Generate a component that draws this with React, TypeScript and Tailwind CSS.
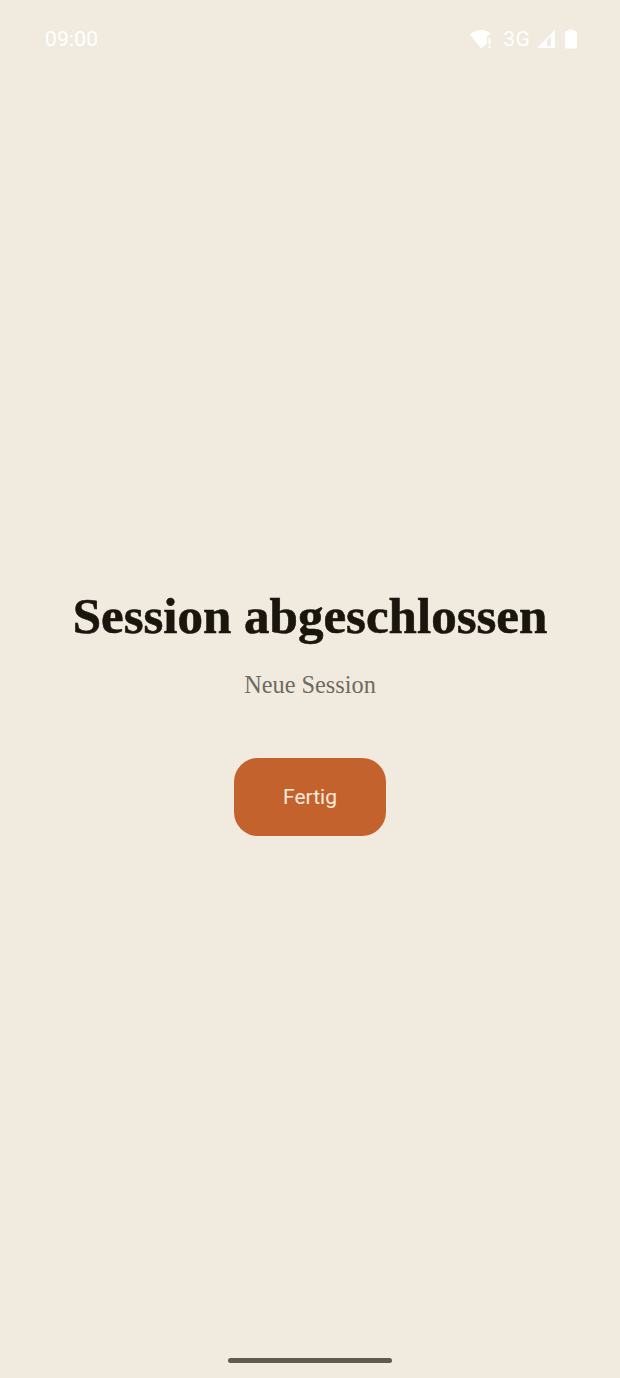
const serif = "font-['Liberation_Serif','DejaVu_Serif',serif]"

function StatusBar() {
  return (
    <div className="flex items-center justify-between pl-[45px] pr-[42px] pt-[27px] text-white">
      <span className="font-['Roboto',sans-serif] text-[21px] leading-[24px] tracking-[0.2px]">09:00</span>
      <div className="flex items-center">
        <svg width="24" height="20" viewBox="0 0 24 20" fill="white">
          <path d="M0 5.5C3 2.5 7 1 11 1s7 1.2 10 3.6L17 7.5V14.5L11 19.5Z" />
          <rect x="18.5" y="9" width="2" height="6.5" />
          <rect x="18.5" y="17" width="2" height="2.2" />
        </svg>
        <span className="ml-[9px] font-['Roboto',sans-serif] text-[21px] leading-[24px] tracking-[0.3px]">3G</span>
        <svg className="ml-[6px]" width="20" height="20" viewBox="0 0 20 20" fill="white">
          <path fillRule="evenodd" d="M19 1V19H1ZM15 7 11 11V17H15Z" />
        </svg>
        <svg className="ml-[8px]" width="14" height="20" viewBox="0 0 14 20" fill="white">
          <path d="M4.5 0.5H9.5V2H11.5C12.3 2 13 2.7 13 3.5V18C13 18.8 12.3 19.5 11.5 19.5H2.5C1.7 19.5 1 18.8 1 18V3.5C1 2.7 1.7 2 2.5 2H4.5Z" />
        </svg>
      </div>
    </div>
  )
}

export default function App() {
  return (
    <div className="h-[1378px] bg-[#f0eadf] flex flex-col overflow-hidden">
      <StatusBar />
      <div className="flex flex-col items-center pt-[537px]">
        <h1 className={`${serif} text-[51px] leading-[56px] font-bold text-[#1a150d] [-webkit-text-stroke:0.6px_#1a150d]`}>
          Session abgeschlossen
        </h1>
        <p className={`${serif} mt-[26px] text-[24.3px] leading-[30px] text-[#6f6a5f]`}>Neue Session</p>
        <button className="mt-[58px] w-[152px] h-[78px] rounded-[24px] bg-[#c4622d] text-[#f8ecdf] font-['Roboto',sans-serif] text-[21px] leading-[28px]">
          Fertig
        </button>
      </div>
      <div className="mt-auto mb-[15px] mx-auto w-[164px] h-[5px] rounded-full bg-[#5f5b4e]" />
    </div>
  )
}
